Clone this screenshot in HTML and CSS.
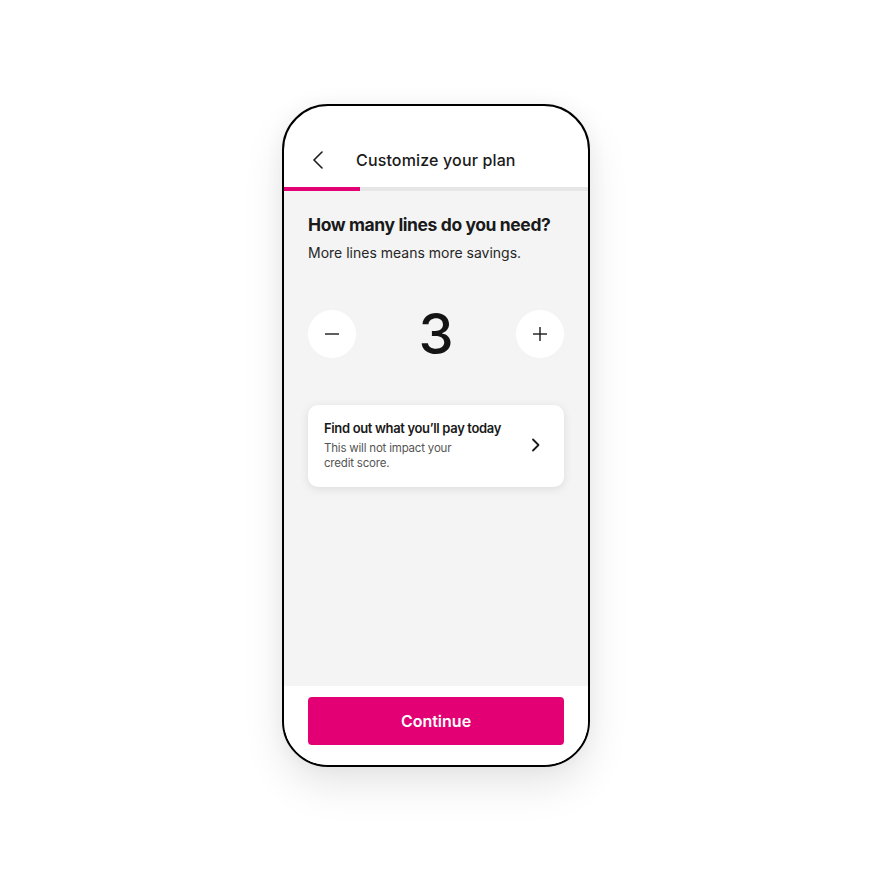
FILE: index.html
```html
<!DOCTYPE html>
<html lang="en">
<head>
  <meta charset="UTF-8" />
  <meta name="viewport" content="width=device-width, initial-scale=1.0"/>
  <title>Customize your plan</title>
  <link rel="stylesheet" href="styles.css">
</head>
<body>
  <div class="phone">
    <header class="top-bar">
      <button class="back" aria-label="Back">
        <svg width="12" height="18" viewBox="0 0 12 18" fill="none">
          <polyline points="10,1 2,9 10,17" stroke="#1a1a1a" stroke-width="1.6" stroke-linecap="round" stroke-linejoin="round"/>
        </svg>
      </button>
      <h2 class="title">Customize your plan</h2>
    </header>

    <div class="progress">
      <div class="progress-fill"></div>
    </div>

    <main class="content">
      <h1 class="question">How many lines do you need?</h1>
      <p class="hint">More lines means more savings.</p>

      <div class="stepper">
        <button class="step-btn" id="minus" aria-label="Remove a line">
          <svg width="16" height="16" viewBox="0 0 16 16">
            <line x1="1" y1="8" x2="15" y2="8" stroke="#1a1a1a" stroke-width="1.4"/>
          </svg>
        </button>
        <span class="count" id="count">3</span>
        <button class="step-btn" id="plus" aria-label="Add a line">
          <svg width="16" height="16" viewBox="0 0 16 16">
            <line x1="1" y1="8" x2="15" y2="8" stroke="#1a1a1a" stroke-width="1.4"/>
            <line x1="8" y1="1" x2="8" y2="15" stroke="#1a1a1a" stroke-width="1.4"/>
          </svg>
        </button>
      </div>

      <a class="card" href="#">
        <div class="card-text">
          <div class="card-title">Find out what you’ll pay today</div>
          <div class="card-sub">This will not impact your credit score.</div>
        </div>
        <svg width="9" height="14" viewBox="0 0 9 14" fill="none">
          <polyline points="2,1.5 7.5,7 2,12.5" stroke="#1a1a1a" stroke-width="1.8" stroke-linecap="round" stroke-linejoin="round"/>
        </svg>
      </a>
    </main>

    <footer class="bottom">
      <button class="continue">Continue</button>
    </footer>
  </div>

  <script>
    const count = document.getElementById("count");
    let lines = 3;
    document.getElementById("minus").addEventListener("click", () => {
      if (lines > 1) lines--;
      count.textContent = lines;
    });
    document.getElementById("plus").addEventListener("click", () => {
      if (lines < 12) lines++;
      count.textContent = lines;
    });
  </script>
</body>
</html>
```

FILE: styles.css
```css
* {
  margin: 0;
  padding: 0;
  box-sizing: border-box;
}

body {
  width: 100%;
  height: 100vh;
  background: #fff;
  display: flex;
  justify-content: center;
  align-items: center;
  font-family: Inter, 'Noto Sans', sans-serif;
  color: #1a1a1a;
}

button {
  font-family: inherit;
  border: none;
  background: none;
  cursor: pointer;
}

.phone {
  width: 308px;
  height: 663px;
  margin-top: -1px;
  border: 2px solid #000;
  border-radius: 46px;
  background: #fff;
  overflow: hidden;
  display: flex;
  flex-direction: column;
  box-shadow: 0 18px 40px rgba(0, 0, 0, 0.10), 0 0 20px rgba(0, 0, 0, 0.04);
}

.top-bar {
  height: 81px;
  padding: 26px 0 0 28px;
  display: flex;
  align-items: center;
}

.back {
  display: flex;
  width: 12px;
  height: 18px;
  margin-right: 32px;
}

.title {
  font-size: 16px;
  font-weight: 500;
  letter-spacing: 0.15px;
}

.progress {
  height: 4px;
  background: #e6e6e6;
}

.progress-fill {
  width: 76px;
  height: 100%;
  background: #e20074;
}

.content {
  flex: 1;
  background: #f4f4f4;
  padding: 22px 24px 0;
}

.question {
  font-size: 17.5px;
  line-height: 24px;
  font-weight: 700;
  letter-spacing: -0.4px;
}

.hint {
  margin-top: 6px;
  font-size: 14px;
  line-height: 20px;
  color: #262626;
}

.stepper {
  margin-top: 47px;
  display: flex;
  justify-content: space-between;
  align-items: center;
}

.step-btn {
  width: 48px;
  height: 48px;
  border-radius: 50%;
  background: #fff;
  display: flex;
  justify-content: center;
  align-items: center;
}

.count {
  font-size: 56px;
  line-height: 48px;
  font-weight: 500;
  color: #141414;
}

.card {
  margin-top: 47px;
  display: flex;
  align-items: center;
  justify-content: space-between;
  padding: 14px 24px 16px 16px;
  background: #fff;
  border-radius: 10px;
  box-shadow: 0 2px 10px rgba(0, 0, 0, 0.10);
  text-decoration: none;
  color: inherit;
}

.card-title {
  font-size: 13px;
  line-height: 18px;
  font-weight: 600;
  letter-spacing: -0.35px;
}

.card-sub {
  margin-top: 4px;
  max-width: 140px;
  font-size: 11.5px;
  line-height: 15px;
  letter-spacing: -0.2px;
  color: #555;
}

.bottom {
  padding: 11px 24px 20px;
  background: #fff;
}

.continue {
  width: 100%;
  height: 48px;
  border-radius: 4px;
  background: #e20074;
  color: #fff;
  font-size: 16px;
  font-weight: 600;
}
```
